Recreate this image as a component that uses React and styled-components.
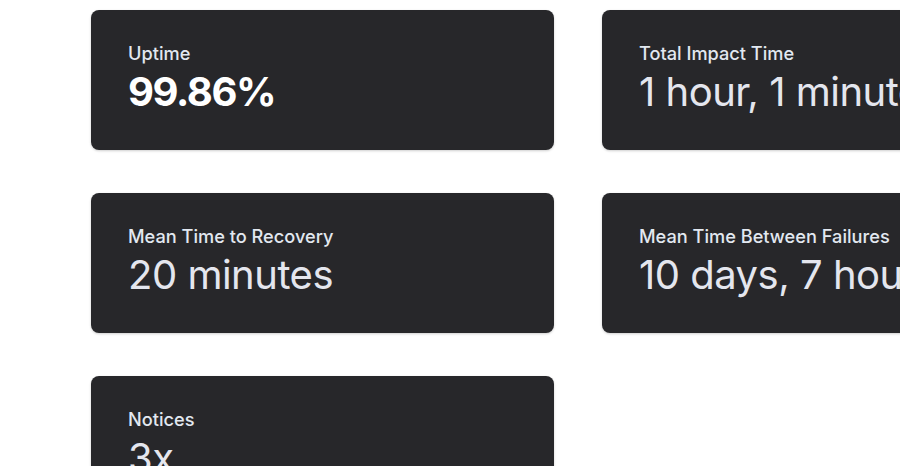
import React from "react";
import styled, { createGlobalStyle } from "styled-components";

const Global = createGlobalStyle`
  html, body {
    margin: 0;
    padding: 0;
    background: #ffffff;
    overflow: hidden;
    font-family: Inter, "Noto Sans", sans-serif;
  }
`;

const Page = styled.main`
  padding: 10px 0 0 91px;
  width: max-content;
`;

const Grid = styled.section`
  display: grid;
  grid-template-columns: 463px 463px;
  column-gap: 48px;
  row-gap: 43px;
`;

const Card = styled.div`
  height: 140px;
  box-sizing: border-box;
  background: #27272a;
  border-radius: 8px;
  box-shadow: 0 1px 3px rgba(0, 0, 0, 0.12), 0 1px 2px rgba(0, 0, 0, 0.08);
  padding: 30px 37px;
  display: flex;
  flex-direction: column;
`;

const Label = styled.div`
  font-size: 18.2px;
  font-weight: 500;
  line-height: 26px;
  color: #e2e8f0;
  white-space: nowrap;
`;

const Value = styled.div`
  font-size: 40px;
  line-height: 52px;
  letter-spacing: ${(p) => (p.$bold ? "-1.4px" : "-0.5px")};
  font-weight: ${(p) => (p.$bold ? 700 : 400)};
  color: ${(p) => (p.$bold ? "#ffffff" : "#e4e6ee")};
  white-space: nowrap;
`;

const stats = [
  { label: "Uptime", value: "99.86%", bold: true },
  { label: "Total Impact Time", value: "1 hour, 1 minute" },
  { label: "Mean Time to Recovery", value: "20 minutes" },
  { label: "Mean Time Between Failures", value: "10 days, 7 hours" },
  { label: "Notices", value: "3x" },
];

export default function App() {
  return (
    <Page>
      <Global />
      <Grid>
        {stats.map((s) => (
          <Card key={s.label}>
            <Label>{s.label}</Label>
            <Value $bold={s.bold}>{s.value}</Value>
          </Card>
        ))}
      </Grid>
    </Page>
  );
}
